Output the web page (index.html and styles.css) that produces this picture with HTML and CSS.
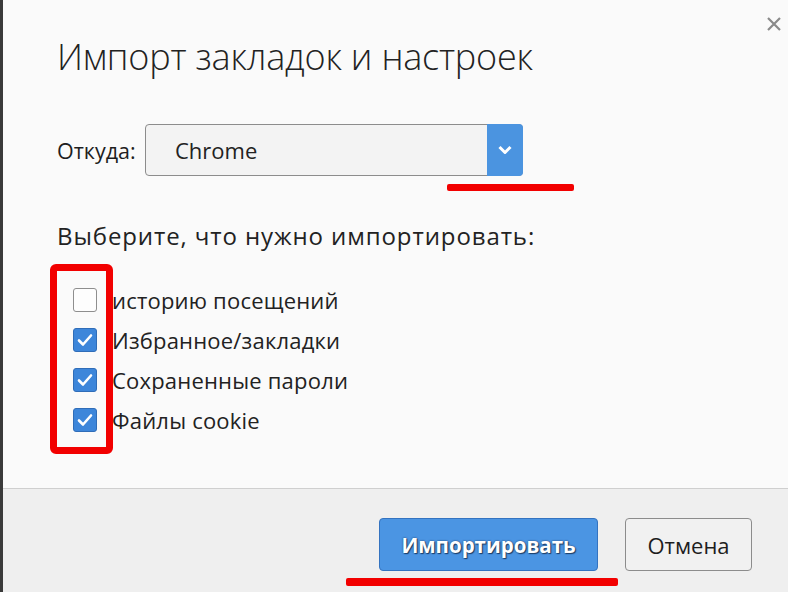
FILE: index.html
```html
<!DOCTYPE html>
<html lang="ru">
<head>
<meta charset="utf-8">
<link rel="stylesheet" href="styles.css">
</head>
<body>
<div class="dialog">
  <div class="main">
    <div class="close" aria-label="Закрыть">
      <svg width="16" height="16" viewBox="0 0 16 16"><path d="M2 2 L14 14 M14 2 L2 14" stroke="#8a8a8a" stroke-width="2.2" fill="none"/></svg>
    </div>
    <h1 class="title">Импорт закладок и настроек</h1>
    <div class="from-row">
      <span class="from-label">Откуда:</span>
      <div class="select">
        <span class="select-value">Chrome</span>
        <span class="select-btn">
          <svg width="16" height="12" viewBox="0 0 16 12"><path d="M2.5 3 L8 8.5 L13.5 3" stroke="#fff" stroke-width="3" fill="none" stroke-linejoin="round"/></svg>
        </span>
        <span class="mark mark-select"></span>
      </div>
    </div>
    <p class="choose">Выберите, что нужно импортировать:</p>
    <div class="options">
      <span class="mark-box"></span>
      <label class="option"><span class="box"></span><span class="opt-text">историю посещений</span></label>
      <label class="option"><span class="box checked"><svg width="18" height="16" viewBox="0 0 18 16"><path d="M3 8.5 L7 12.5 L15 3.5" stroke="#fff" stroke-width="2.6" fill="none" stroke-linecap="round" stroke-linejoin="round"/></svg></span><span class="opt-text">Избранное/закладки</span></label>
      <label class="option"><span class="box checked"><svg width="18" height="16" viewBox="0 0 18 16"><path d="M3 8.5 L7 12.5 L15 3.5" stroke="#fff" stroke-width="2.6" fill="none" stroke-linecap="round" stroke-linejoin="round"/></svg></span><span class="opt-text">Сохраненные пароли</span></label>
      <label class="option"><span class="box checked"><svg width="18" height="16" viewBox="0 0 18 16"><path d="M3 8.5 L7 12.5 L15 3.5" stroke="#fff" stroke-width="2.6" fill="none" stroke-linecap="round" stroke-linejoin="round"/></svg></span><span class="opt-text">Файлы cookie</span></label>
    </div>
  </div>
  <div class="footer">
    <div class="btn-wrap">
      <button class="btn btn-primary">Импортировать</button>
      <span class="mark mark-import"></span>
    </div>
    <button class="btn btn-cancel">Отмена</button>
  </div>
</div>
</body>
</html>
```
FILE: styles.css
```css
* { box-sizing: border-box; }
html, body { margin: 0; padding: 0; }
body {
  width: 788px;
  height: 592px;
  overflow: hidden;
  font-family: "Open Sans", "Noto Sans", sans-serif;
  color: #1e1e1e;
  background: #fafafa;
}
.dialog {
  position: relative;
  width: 788px;
  height: 592px;
  display: flex;
  flex-direction: column;
  border-left: 3px solid #3a3a3a;
  background: #fafafa;
}
.main {
  position: relative;
  flex: 1;
  padding: 32px 0 0 54px;
}
.close {
  position: absolute;
  top: 16px;
  right: 6px;
  width: 16px;
  height: 16px;
}
.close svg { display: block; }
.title {
  margin: 0;
  font-size: 36px;
  font-weight: 300;
  line-height: 50px;
  letter-spacing: -0.2px;
  color: #222;
}
.from-row {
  display: flex;
  align-items: center;
  margin-top: 42px;
}
.from-label {
  font-size: 21.5px;
  width: 88px;
}
.select {
  position: relative;
  width: 378px;
  height: 52px;
  display: flex;
  border: 1px solid #8c8c8c;
  border-radius: 4px;
  background: #f3f3f3;
}
.select-value {
  flex: 1;
  display: flex;
  align-items: center;
  padding-left: 29px;
  font-size: 22px;
  color: #222;
}
.select-btn {
  width: 36px;
  margin: -1px -1px -1px 0;
  display: flex;
  align-items: center;
  justify-content: center;
  background: #4b94e0;
  border-radius: 0 4px 4px 0;
}
.select-btn svg { display: block; }
.mark {
  position: absolute;
  background: #f20000;
  height: 7px;
  border-radius: 2px;
}
.mark-select {
  left: 301px;
  top: 59px;
  width: 127px;
}
.choose {
  margin: 44px 0 0 0;
  font-size: 24px;
  line-height: 32px;
  letter-spacing: 0.9px;
  color: #222;
}
.options {
  position: relative;
  display: flex;
  flex-direction: column;
  gap: 16px;
  margin-top: 36px;
  padding-left: 16px;
}
.mark-box {
  position: absolute;
  left: -7px;
  top: -24px;
  width: 63px;
  height: 190px;
  border: 7px solid #f20000;
  border-radius: 6px;
}
.option {
  display: flex;
  align-items: center;
  height: 24px;
}
.box {
  width: 24px;
  height: 24px;
  flex: none;
  border: 1px solid #8e8e8e;
  border-radius: 3px;
  background: #fdfdfd;
  display: flex;
  align-items: center;
  justify-content: center;
  margin-right: 15px;
}
.box.checked {
  background: #3d86da;
  border-color: #2f6db8;
}
.box svg { display: block; }
.opt-text {
  font-size: 22px;
  letter-spacing: 0.2px;
  color: #222;
}
.footer {
  height: 104px;
  flex: none;
  border-top: 1px solid #cfcfcf;
  background: #efefef;
  display: flex;
  align-items: flex-start;
  justify-content: flex-end;
  padding: 29px 36px 0 0;
  gap: 27px;
}
.btn-wrap { position: relative; }
.btn {
  font-family: "Open Sans", "Noto Sans", sans-serif;
  height: 53px;
  border-radius: 4px;
  font-size: 20px;
  cursor: pointer;
  padding: 0;
}
.btn-primary {
  width: 219px;
  background: #4b95e3;
  border: 1px solid #3473c0;
  color: #fff;
  font-weight: 700;
  font-size: 20.5px;
  text-shadow: 0 0 2px #1d3d66, 1px 1px 1px #1d3d66;
}
.btn-cancel {
  width: 127px;
  background: #f1f1f1;
  border: 1px solid #8c8c8c;
  color: #1e1e1e;
  font-size: 22px;
}
.mark-import {
  left: -33px;
  top: 60px;
  width: 272px;
  height: 8px;
}
```
